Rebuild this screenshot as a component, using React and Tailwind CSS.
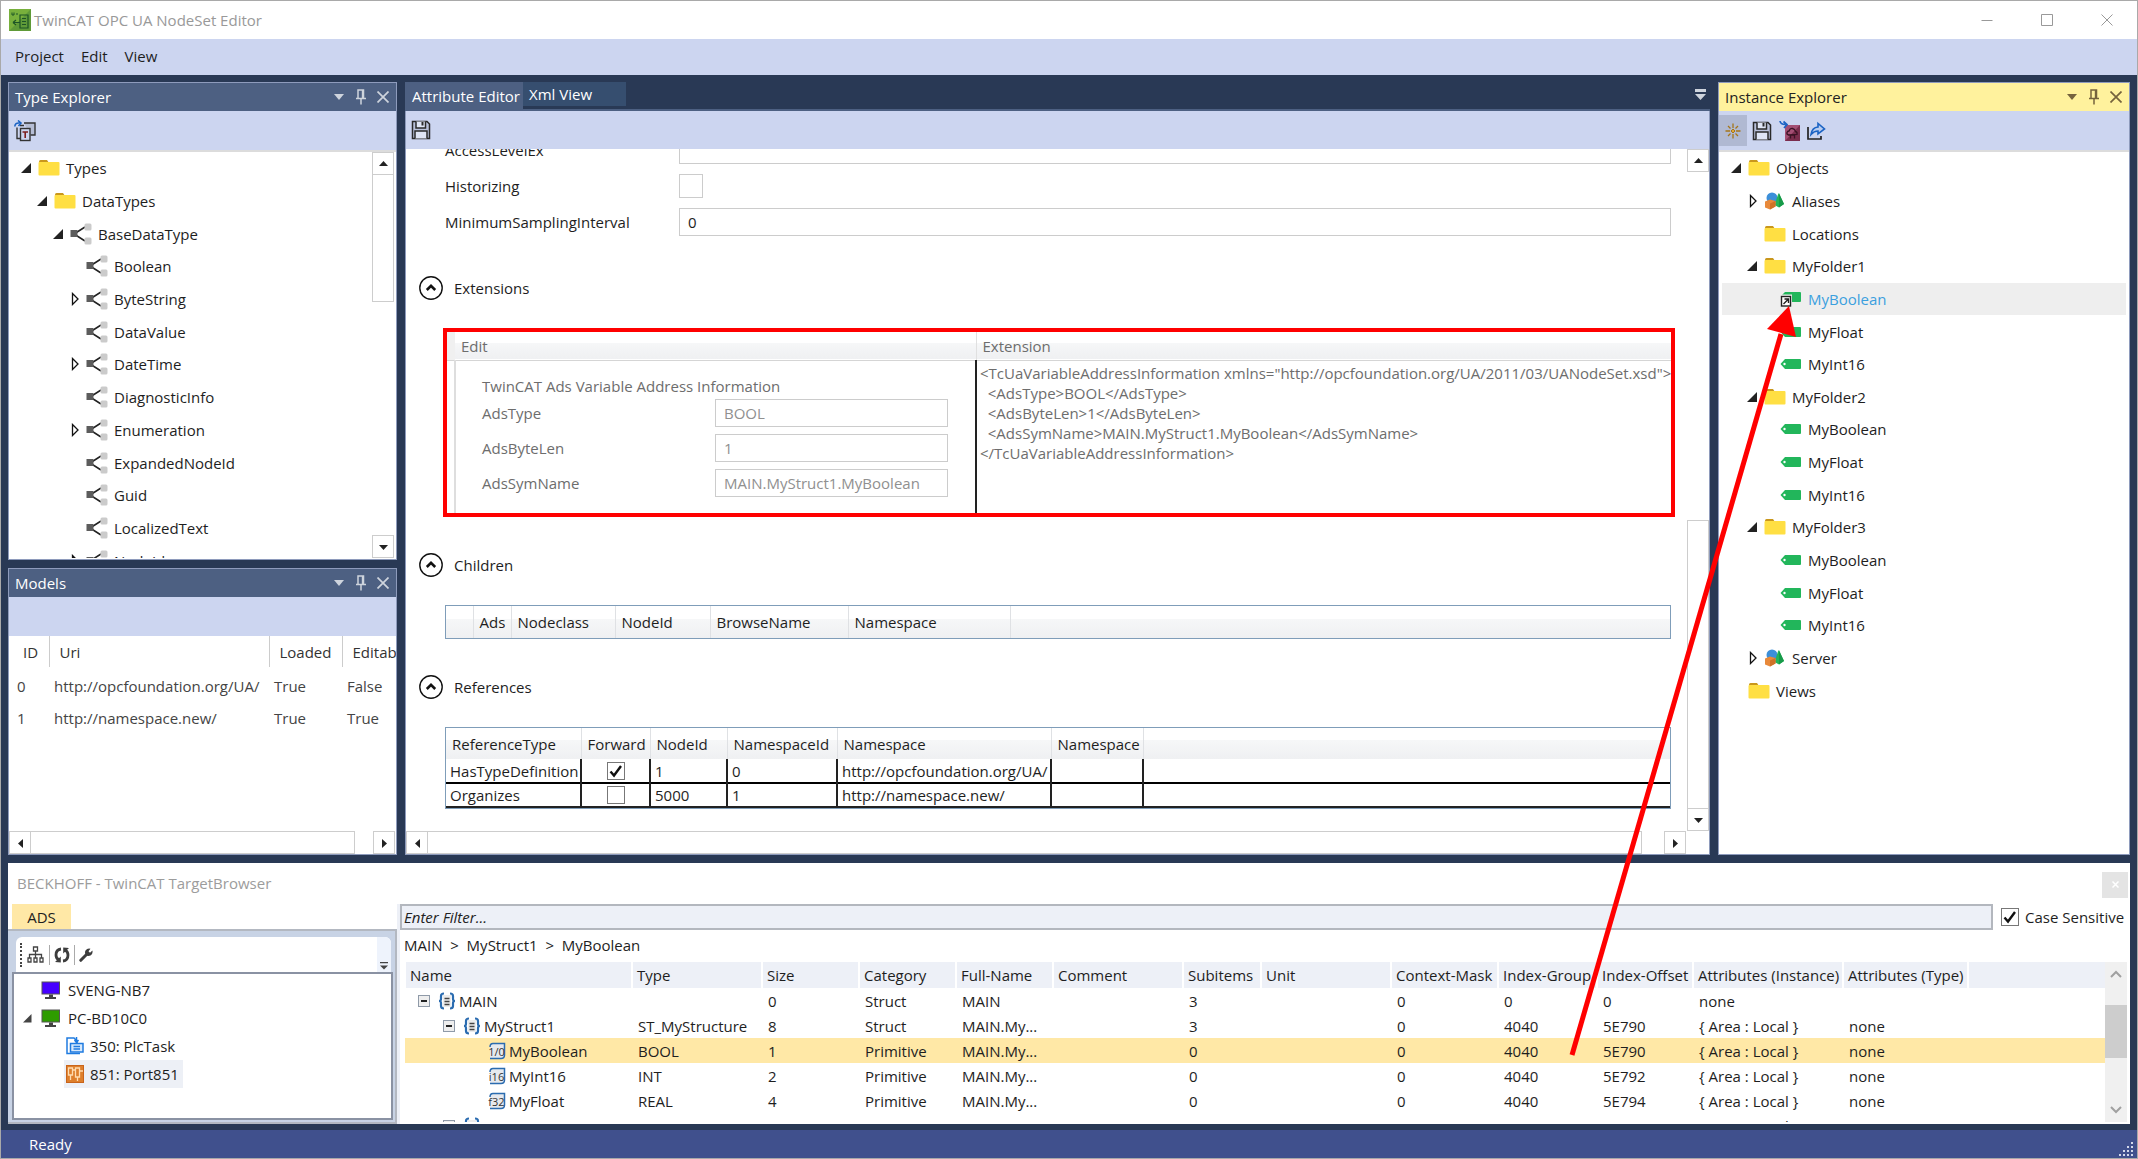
import React from 'react';
import clsx from 'clsx';

const indents = ['pl-2', 'pl-6', 'pl-10', 'pl-14'];

const typeNodes = [
  { label: 'Types', level: 0, icon: 'folder', state: 'open' },
  { label: 'DataTypes', level: 1, icon: 'folder', state: 'open' },
  { label: 'BaseDataType', level: 2, icon: 'type', state: 'open' },
  { label: 'Boolean', level: 3, icon: 'type' },
  { label: 'ByteString', level: 3, icon: 'type', state: 'closed' },
  { label: 'DataValue', level: 3, icon: 'type' },
  { label: 'DateTime', level: 3, icon: 'type', state: 'closed' },
  { label: 'DiagnosticInfo', level: 3, icon: 'type' },
  { label: 'Enumeration', level: 3, icon: 'type', state: 'closed' },
  { label: 'ExpandedNodeId', level: 3, icon: 'type' },
  { label: 'Guid', level: 3, icon: 'type' },
  { label: 'LocalizedText', level: 3, icon: 'type' },
  { label: 'NodeId', level: 3, icon: 'type', state: 'closed' },
];

const instanceNodes = [
  { label: 'Objects', level: 0, icon: 'folder', state: 'open' },
  { label: 'Aliases', level: 1, icon: 'object', state: 'closed' },
  { label: 'Locations', level: 1, icon: 'folder' },
  { label: 'MyFolder1', level: 1, icon: 'folder', state: 'open' },
  { label: 'MyBoolean', level: 2, icon: 'linkedTag', selected: true },
  { label: 'MyFloat', level: 2, icon: 'tag' },
  { label: 'MyInt16', level: 2, icon: 'tag' },
  { label: 'MyFolder2', level: 1, icon: 'folder', state: 'open' },
  { label: 'MyBoolean', level: 2, icon: 'tag' },
  { label: 'MyFloat', level: 2, icon: 'tag' },
  { label: 'MyInt16', level: 2, icon: 'tag' },
  { label: 'MyFolder3', level: 1, icon: 'folder', state: 'open' },
  { label: 'MyBoolean', level: 2, icon: 'tag' },
  { label: 'MyFloat', level: 2, icon: 'tag' },
  { label: 'MyInt16', level: 2, icon: 'tag' },
  { label: 'Server', level: 1, icon: 'object', state: 'closed' },
  { label: 'Views', level: 0, icon: 'folder' },
];

const models = [
  ['0', 'http://opcfoundation.org/UA/', 'True', 'False'],
  ['1', 'http://namespace.new/', 'True', 'True'],
];

const references = [
  { type: 'HasTypeDefinition', forward: true, nodeId: '1', nsId: '0', ns: 'http://opcfoundation.org/UA/' },
  { type: 'Organizes', forward: false, nodeId: '5000', nsId: '1', ns: 'http://namespace.new/' },
];

const adsFields = [
  ['AdsType', 'BOOL'],
  ['AdsByteLen', '1'],
  ['AdsSymName', 'MAIN.MyStruct1.MyBoolean'],
];

const xml = `<TcUaVariableAddressInformation xmlns="http://opcfoundation.org/UA/2011/03/UANodeSet.xsd">
  <AdsType>BOOL</AdsType>
  <AdsByteLen>1</AdsByteLen>
  <AdsSymName>MAIN.MyStruct1.MyBoolean</AdsSymName>
</TcUaVariableAddressInformation>`;

const symbolColumns = [
  ['Name', 'w-[227px]'],
  ['Type', 'w-[130px]'],
  ['Size', 'w-[97px]'],
  ['Category', 'w-[97px]'],
  ['Full-Name', 'w-[97px]'],
  ['Comment', 'w-[130px]'],
  ['Subitems', 'w-[78px]'],
  ['Unit', 'w-[130px]'],
  ['Context-Mask', 'w-[107px]'],
  ['Index-Group', 'w-[99px]'],
  ['Index-Offset', 'w-[96px]'],
  ['Attributes (Instance)', 'w-[150px]'],
  ['Attributes (Type)', 'w-[125px]'],
  ['', 'w-auto'],
];

const local = '{ Area : Local }';
const symbols = [
  { name: 'MAIN', level: 0, icon: 'struct', cells: ['', '0', 'Struct', 'MAIN', '', '3', '', '0', '0', '0', 'none', ''] },
  { name: 'MyStruct1', level: 1, icon: 'struct', cells: ['ST_MyStructure', '8', 'Struct', 'MAIN.My...', '', '3', '', '0', '4040', '5E790', local, 'none'] },
  { name: 'MyBoolean', level: 2, icon: '1/0', selected: true, cells: ['BOOL', '1', 'Primitive', 'MAIN.My...', '', '0', '', '0', '4040', '5E790', local, 'none'] },
  { name: 'MyInt16', level: 2, icon: 'i16', cells: ['INT', '2', 'Primitive', 'MAIN.My...', '', '0', '', '0', '4040', '5E792', local, 'none'] },
  { name: 'MyFloat', level: 2, icon: 'f32', cells: ['REAL', '4', 'Primitive', 'MAIN.My...', '', '0', '', '0', '4040', '5E794', local, 'none'] },
  { name: 'MyStruct2', level: 1, icon: 'struct', cells: ['ST_MyStructure', '8', 'Struct', 'MAIN.My...', '', '3', '', '0', '4040', '5E798', local, 'none'] },
];
const symbolIndents = ['pl-[13px]', 'pl-[38px]', 'pl-[83px]'];

const headerFill = 'bg-[linear-gradient(#ffffff_40%,#f6f7f8_40%,#eff0f2)]';

const FolderIcon = () => (
  <svg viewBox="0 0 22 18" className="w-[22px] h-[18px]">
    <path d="M1 4V2.5Q1 1 2.500 1H9L11 4Z" fill="#c9971c" />
    <path d="M.5 4Q.5 3 1.500 3H20.500Q21.500 3 21.500 4V15.500Q21.500 16.500 20.500 16.500H1.500Q.5 16.500 .5 15.500Z" fill="#ffdf43" />
  </svg>
);

const TypeIcon = () => (
  <svg viewBox="0 0 22 22" className="w-[22px] h-[22px]">
    <path d="M15 4L4 11L15 18" fill="none" stroke="#222" strokeWidth="1.600" />
    <rect x="14.500" y="0.500" width="7" height="7" rx="1.500" fill="#cbcbcb" />
    <rect x="14.500" y="14.500" width="7" height="7" rx="1.500" fill="#cbcbcb" />
    <rect x="0.500" y="7" width="7" height="7" fill="#5c5c5c" />
  </svg>
);

const ObjectIcon = () => (
  <svg viewBox="0 0 22 18" className="w-[22px] h-[18px]">
    <circle cx="8" cy="6" r="5.500" fill="#3c8fd9" />
    <path d="M14.500 1L20 12L15 15.500L10.500 13Z" fill="#22b45a" />
    <path d="M15 1L20 12L15 15.500Z" fill="#179a49" />
    <path d="M1 9.500L6 7.500L11.500 9V14.500L6 17.500L1 15.500Z" fill="#e8893a" />
    <path d="M6 11.500L11.500 9V14.500L6 17.500Z" fill="#cf7227" />
  </svg>
);

const TagIcon = () => (
  <svg viewBox="0 0 22 12" className="w-[22px] h-3">
    <path d="M0.500 6L5 1H20Q21 1 21 2V10Q21 11 20 11H5Z" fill="#22b65b" />
    <circle cx="4.500" cy="6" r="1.200" fill="#fff" />
  </svg>
);

const LinkedTagIcon = () => (
  <svg viewBox="0 0 22 18" className="w-[22px] h-[18px]">
    <path d="M2 5L5 2H20Q21 2 21 3V11Q21 12 20 12H5Z" fill="#22b65b" />
    <rect x="0" y="4.500" width="12" height="13" fill="#eee" />
    <rect x="1.500" y="6.500" width="9" height="9.500" fill="#fff" stroke="#222" strokeWidth="1.400" />
    <path d="M3.500 14L8 9.500M4.500 9H8.500V13" fill="none" stroke="#222" strokeWidth="1.400" />
  </svg>
);

const nodeIcons = { folder: FolderIcon, type: TypeIcon, object: ObjectIcon, tag: TagIcon, linkedTag: LinkedTagIcon };

const Expander = ({ state }) => (
  <span className="w-[18px] shrink-0 flex items-center">
    {state === 'open' && (
      <svg viewBox="0 0 12 12" className="w-3 h-3">
        <path d="M11 1V11H1Z" fill="#222" />
      </svg>
    )}
    {state === 'closed' && (
      <svg viewBox="0 0 12 14" className="w-3 h-3.5 ml-[3px]">
        <path d="M1.500 1.500L7 7L1.500 12.500Z" fill="#fff" stroke="#111" strokeWidth="1.300" />
      </svg>
    )}
  </span>
);

const Tree = ({ nodes, className }) => (
  <ul className={clsx('grid auto-rows-fr shrink-0 mx-[3px]', className)}>
    {nodes.map((node, i) => {
      const Icon = nodeIcons[node.icon];
      return (
        <li
          key={i}
          className={clsx('flex items-center', indents[node.level], node.selected && 'bg-[#eeeeee] text-[#3ba0de]')}
        >
          <Expander state={node.state} />
          <Icon />
          <span className="pl-1.5">{node.label}</span>
        </li>
      );
    })}
  </ul>
);

const DockHeader = ({ title, active }) => (
  <div
    className={clsx(
      'h-7 shrink-0 flex items-center pl-1.5 pr-0.5',
      active ? 'bg-[#fff29d] text-[#222]' : 'bg-[#4d6082] text-white',
    )}
  >
    <h2 className="flex-1">{title}</h2>
    <div className={clsx('flex items-center', active ? 'text-[#75633d]' : 'text-[#ced4dd]')}>
      <button type="button" aria-label="Window position" className="w-[22px] flex justify-center">
        <svg viewBox="0 0 10 6" className="w-2.5 h-1.5"><path d="M0 0H10L5 6Z" fill="currentColor" /></svg>
      </button>
      <button type="button" aria-label="Auto hide" className="w-[22px] flex justify-center">
        <svg viewBox="0 0 10 16" className="w-2.5 h-4" fill="none" stroke="currentColor" strokeWidth="1.500">
          <path d="M2 9V1H7.500V9M0 9.500H10M5 9.500V15.500" />
          <path d="M6.800 1V9" strokeWidth="2" />
        </svg>
      </button>
      <button type="button" aria-label="Close" className="w-[22px] flex justify-center">
        <svg viewBox="0 0 12 12" className="w-3 h-3" stroke="currentColor" strokeWidth="1.700"><path d="M.5 .5L11.500 11.500M11.500 .5L.5 11.500" /></svg>
      </button>
    </div>
  </div>
);

const arrows = {
  up: 'M1 7L5.500 2L10 7Z',
  down: 'M1 3L5.500 8L10 3Z',
  left: 'M8 1V10L3 5.500Z',
  right: 'M3 1V10L8 5.500Z',
};

const ScrollButton = ({ dir }) => (
  <button type="button" aria-label={`Scroll ${dir}`} className="w-[22px] h-[23px] shrink-0 border border-[#cdcdcd] flex items-center justify-center bg-white">
    <svg viewBox="0 0 11 10" className="w-[11px] h-2.5"><path d={arrows[dir]} fill="#222" /></svg>
  </button>
);

const Checkbox = ({ id, checked, label, className }) => (
  <span className={clsx('inline-grid', className)}>
    <input
      id={id}
      type="checkbox"
      aria-label={label}
      defaultChecked={checked}
      className="peer appearance-none w-full h-full border border-[#777] bg-white [grid-area:1/1]"
    />
    <svg viewBox="0 0 18 18" className="w-full h-full hidden peer-checked:block pointer-events-none [grid-area:1/1]">
      <path d="M3.500 9.500L7 13.500L14 4" fill="none" stroke="#111" strokeWidth="2.400" />
    </svg>
  </span>
);

const SaveIcon = () => (
  <svg viewBox="0 0 20 20" className="w-5 h-5" fill="none" stroke="#2a2a2a" strokeWidth="1.500">
    <path d="M1.500 1.500H16L18.500 4V18.500H1.500Z" fill="#b9c1da" />
    <path d="M5 1.500V8H14.500V1.500" fill="#dfe5f5" />
    <path d="M4 18.500V11H16V18.500" fill="#dfe5f5" />
    <path d="M11.500 2V5.500" strokeWidth="2" />
  </svg>
);

const Section = ({ title, children }) => (
  <section className="mt-9">
    <div className="flex items-center gap-[11px] pl-[13px] h-6">
      <button type="button" aria-label={`Collapse ${title}`} className="w-6 h-6 rounded-full">
        <svg viewBox="0 0 24 24" className="w-6 h-6" fill="none" stroke="#111">
          <circle cx="12" cy="12" r="11.200" strokeWidth="1.400" />
          <path d="M7.800 14L12 9.800L16.200 14" strokeWidth="2.600" />
        </svg>
      </button>
      <h3>{title}</h3>
    </div>
    <div className="mt-7">{children}</div>
  </section>
);

const TypeExplorer = () => (
  <section className="flex-1 min-h-0 flex flex-col border border-[#8e9bbc] bg-white">
    <DockHeader title="Type Explorer" />
    <div className="h-[39px] shrink-0 bg-[#ccd5f0] flex items-center pl-[5px]">
      <button type="button" aria-label="Import types">
        <svg viewBox="0 0 22 22" className="w-[22px] h-[22px]" fill="none" stroke="#333" strokeWidth="1.400">
          <path d="M10 3H21V15H16.500" fill="#b5bdd4" />
          <path d="M3 7.500V18.500H6M6 5.500H10" />
          <rect x="6.500" y="8.500" width="9.500" height="12" fill="#ccd5f0" />
          <path d="M8.500 12H14M11.200 12V18" stroke="#7d1f1f" strokeWidth="1.600" />
          <path d="M.8 6.500Q1 2.500 5.500 3M4 .5L7 3L4.500 6" stroke="#1b63c4" strokeWidth="1.600" />
        </svg>
      </button>
    </div>
    <div className="flex-1 min-h-0 flex border-t-2 border-[#dcdcdc] pb-px">
      <div className="flex-1 overflow-hidden flex flex-col">
        <Tree nodes={typeNodes} className="h-[425px]" />
      </div>
      <div className="w-[22px] flex flex-col bg-white mr-0.5">
        <ScrollButton dir="up" />
        <div className="h-[127px] border border-t-0 border-[#cdcdcd]" />
        <div className="flex-1" />
        <ScrollButton dir="down" />
      </div>
    </div>
  </section>
);

const Models = () => (
  <section className="h-[287px] flex flex-col border border-[#8e9bbc] bg-white">
    <DockHeader title="Models" />
    <div className="h-[39px] shrink-0 bg-[#ccd5f0]" />
    <div className="flex-1 overflow-hidden">
      <table className="table-fixed w-[460px] text-left text-[#444]">
        <colgroup>
          <col className="w-10" />
          <col className="w-[220px]" />
          <col className="w-[73px]" />
          <col className="w-[127px]" />
        </colgroup>
        <thead>
          <tr className="h-[31px] text-[#333]">
            <th className="font-medium pl-3.5 border-r border-[#ccc]">ID</th>
            <th className="font-medium pl-2.5 border-r border-[#ccc]">Uri</th>
            <th className="font-medium pl-2.5 border-r border-[#ccc]">Loaded</th>
            <th className="font-medium pl-2.5">Editable</th>
          </tr>
        </thead>
        <tbody>
          <tr className="h-[3px]"><td colSpan={4} /></tr>
          {models.map((row) => (
            <tr key={row[0]} className="h-8">
              <td className="pl-2">{row[0]}</td>
              {row.slice(1).map((cell, i) => (
                <td key={i} className="pl-[5px] whitespace-nowrap">{cell}</td>
              ))}
            </tr>
          ))}
        </tbody>
      </table>
    </div>
    <div className="flex h-[23px] shrink-0 pr-px">
      <ScrollButton dir="left" />
      <div className="flex-1 border border-l-0 border-[#cdcdcd]" />
      <div className="w-[18px]" />
      <ScrollButton dir="right" />
    </div>
  </section>
);

const ExtensionTable = () => (
  <div className="ml-[37px] mr-3 border-4 border-[#ff0000] text-[#6d6d6d]">
    <table className="table-fixed w-full text-left">
      <colgroup>
        <col className="w-2" />
        <col className="w-[521px]" />
        <col />
      </colgroup>
      <thead>
        <tr className={clsx('h-7 border-b border-[#d5d5d5]', headerFill)}>
          <th className="bg-[#f0f0f0]" />
          <th className="font-normal pl-1.5 border-r border-[#e0e0e0]">Edit</th>
          <th className="font-normal pl-1.5">Extension</th>
        </tr>
      </thead>
      <tbody>
        <tr className="h-[153px] align-top">
          <td className="border-r-2 border-[#dedede]" />
          <td className="border-r-2 border-[#222] pl-[26px] pt-[11px]">
            <p className="h-[27px] leading-7">TwinCAT Ads Variable Address Information</p>
            <div className="flex flex-col gap-[7px]">
              {adsFields.map(([label, value]) => (
                <div key={label} className="flex items-center">
                  <label htmlFor={label} className="w-[233px]">{label}</label>
                  <input id={label} readOnly value={value} className="w-[233px] h-7 border border-[#ccc] px-2 text-[#909090]" />
                </div>
              ))}
            </div>
          </td>
          <td className="pl-[3px] pt-0.5">
            <pre className="font-[inherit] leading-5">{xml}</pre>
          </td>
        </tr>
      </tbody>
    </table>
  </div>
);

const ChildrenTable = () => (
  <div className="ml-[39px] mr-4 border border-[#7f9db9]">
    <table className="table-fixed w-full text-left">
      <thead>
        <tr className={clsx('h-8', headerFill)}>
          <th className="w-[27px] border-r border-[#dfe1e4]" />
          <th className="w-[38px] font-normal pl-1.5 border-r border-[#dfe1e4]">Ads</th>
          <th className="w-[104px] font-normal pl-1.5 border-r border-[#dfe1e4]">Nodeclass</th>
          <th className="w-[95px] font-normal pl-1.5 border-r border-[#dfe1e4]">NodeId</th>
          <th className="w-[138px] font-normal pl-1.5 border-r border-[#dfe1e4]">BrowseName</th>
          <th className="w-[162px] font-normal pl-1.5 border-r border-[#dfe1e4]">Namespace</th>
          <th />
        </tr>
      </thead>
    </table>
  </div>
);

const ReferencesTable = () => (
  <div className="ml-[39px] mr-4 border border-[#7f9db9]">
    <table className="table-fixed w-full text-left">
      <colgroup>
        <col className="w-[135px]" />
        <col className="w-[69px]" />
        <col className="w-[77px]" />
        <col className="w-[110px]" />
        <col className="w-[214px]" />
        <col className="w-[92px]" />
        <col />
      </colgroup>
      <thead>
        <tr className={clsx('h-[31px]', headerFill)}>
          {['ReferenceType', 'Forward', 'NodeId', 'NamespaceId', 'Namespace', 'Namespace'].map((name, i) => (
            <th key={i} className="font-normal pl-1.5 border-r border-[#dfe1e4] whitespace-nowrap">{name}</th>
          ))}
          <th />
        </tr>
      </thead>
      <tbody>
        {references.map((ref) => (
          <tr key={ref.type} className="h-6 border-b-2 border-black last:border-[#222]">
            <td className="pl-1 border-r-2 border-[#222] whitespace-nowrap">{ref.type}</td>
            <td className="border-r-2 border-[#222]">
              <div className="flex justify-center">
                <Checkbox label={`${ref.type} forward`} checked={ref.forward} className="w-[18px] h-[18px]" />
              </div>
            </td>
            <td className="pl-1 border-r-2 border-[#222]">{ref.nodeId}</td>
            <td className="pl-1 border-r-2 border-[#222]">{ref.nsId}</td>
            <td className="pl-1 border-r-2 border-[#222] whitespace-nowrap">{ref.ns}</td>
            <td className="border-r-2 border-[#222]" />
            <td />
          </tr>
        ))}
      </tbody>
    </table>
  </div>
);

const AttributeEditor = () => (
  <section className="flex-1 min-w-0 flex flex-col">
    <div className="h-[29px] shrink-0 flex items-start justify-between border-b-2 border-[#4d6082]">
      <div className="flex items-start">
        <button type="button" className="h-7 w-[118px] bg-[#4d6082] text-white pl-[7px] text-left whitespace-nowrap">Attribute Editor</button>
        <button type="button" className="h-6 w-[103px] bg-[#364e6f] text-white pl-1.5 text-left">Xml View</button>
      </div>
      <button type="button" aria-label="Open documents" className="mt-[7px] mr-1">
        <svg viewBox="0 0 11 11" className="w-[11px] h-[11px]" fill="#ced4dd"><path d="M0 0H11V3H0ZM0 5H11L5.500 11Z" /></svg>
      </button>
    </div>
    <div className="flex-1 min-h-0 flex flex-col border border-t-0 border-[#8e9bbc] bg-white">
      <div className="h-[38px] shrink-0 bg-[#ccd5f0] flex items-center pl-[5px]">
        <button type="button" aria-label="Save"><SaveIcon /></button>
      </div>
      <div className="flex-1 min-h-0 flex">
        <div className="flex-1 min-w-0 overflow-hidden">
          <div className="-mt-[17px] pl-[39px] pr-4">
            <div className="h-9 flex items-center">
              <label htmlFor="accessLevelEx" className="w-[234px]">AccessLevelEx</label>
              <input id="accessLevelEx" defaultValue="" className="flex-1 h-[27px] border border-[#ccc] px-2" />
            </div>
            <div className="h-9 flex items-center">
              <label htmlFor="historizing" className="w-[234px]">Historizing</label>
              <input id="historizing" type="checkbox" className="appearance-none w-6 h-6 border border-[#ccc]" />
            </div>
            <div className="h-9 flex items-center">
              <label htmlFor="samplingInterval" className="w-[234px]">MinimumSamplingInterval</label>
              <input id="samplingInterval" defaultValue="0" className="flex-1 h-7 border border-[#ccc] px-2" />
            </div>
          </div>
          <Section title="Extensions"><ExtensionTable /></Section>
          <Section title="Children"><ChildrenTable /></Section>
          <Section title="References"><ReferencesTable /></Section>
        </div>
        <div className="w-[22px] flex flex-col">
          <ScrollButton dir="up" />
          <div className="flex-1" />
          <div className="h-[288px] border border-b-0 border-[#cdcdcd]" />
          <ScrollButton dir="down" />
        </div>
      </div>
      <div className="flex h-[23px] shrink-0 pr-[23px]">
        <ScrollButton dir="left" />
        <div className="flex-1 border border-l-0 border-[#cdcdcd]" />
        <div className="w-[22px]" />
        <ScrollButton dir="right" />
      </div>
    </div>
  </section>
);

const InstanceExplorer = () => (
  <section className="w-[412px] shrink-0 flex flex-col border border-[#8e9bbc] bg-white">
    <DockHeader title="Instance Explorer" active />
    <div className="h-[39px] shrink-0 bg-[#ccd5f0] flex items-center gap-[5px]">
      <button type="button" aria-label="Highlight new" className="w-7 h-[31px] bg-[#b0b9d2] flex items-center justify-center">
        <svg viewBox="0 0 16 16" className="w-4 h-4" stroke="#a5761a" strokeWidth="1.300" fill="none">
          <path d="M8 0.500V5M8 11V15.500M.5 8H5M11 8H15.500M3 3L5.500 5.500M10.500 10.500L13 13M13 3L10.500 5.500M5.500 10.500L3 13" />
          <path d="M8 6L10 8L8 10L6 8Z" fill="#e0a83a" strokeWidth="1" />
        </svg>
      </button>
      <button type="button" aria-label="Save instances"><SaveIcon /></button>
      <button type="button" aria-label="Import" className="ml-0.5">
        <svg viewBox="0 0 22 22" className="w-[22px] h-[22px]" fill="none">
          <path d="M6 5H21V21H6Z" fill="#a34f74" />
          <path d="M6 21H21V5Z" fill="#7a2d4d" />
          <path d="M9.500 15Q7.500 14.500 8 12.500Q8.500 11 10 11Q11 8 13.500 8.500Q16 9 16.500 11.500Q18.500 12 18 14.500L9.500 15ZM11.500 15V18.500M15.500 15V18.500" stroke="#3a1224" strokeWidth="1.300" />
          <path d="M1 1Q1.500 4.500 6.500 4.500M4.500 1.500L8 4.500L5 8" stroke="#1b63c4" strokeWidth="1.700" />
        </svg>
      </button>
      <button type="button" aria-label="Export">
        <svg viewBox="0 0 20 20" className="w-5 h-5" fill="none">
          <path d="M2 6V18H15V15" stroke="#222" strokeWidth="1.700" />
          <path d="M5 13.500Q6 6.500 12 6V2.500L18.500 8L12 13V10Q8 10 5 13.500Z" stroke="#1b63c4" strokeWidth="1.600" fill="#b9cdf0" />
        </svg>
      </button>
    </div>
    <div className="flex-1 min-h-0 overflow-hidden flex flex-col border-t-2 border-[#dcdcdc]">
      <Tree nodes={instanceNodes} className="h-[555px]" />
    </div>
  </section>
);

const Monitor = ({ fill }) => (
  <svg viewBox="0 0 20 18" className="w-5 h-[18px]">
    <rect x="0.500" y="0.500" width="18.500" height="13" fill="#555" />
    <rect x="1.500" y="1.500" width="16.500" height="11" fill={fill} />
    <path d="M8 13.500H12V16H15V18H4V16H8Z" fill="#444" />
  </svg>
);

const TargetTree = () => (
  <div className="w-[389px] shrink-0 flex flex-col">
    <div className="pl-1 flex">
      <button type="button" className="w-[59px] h-[25px] bg-[#ffe8a6]">ADS</button>
    </div>
    <div className="flex-1 flex flex-col bg-[#c8d3e5] border-2 border-[#b3b8c1] border-l-0 pt-1.5 pb-0.5">
      <div className="h-[35px] ml-2 mr-1 bg-white rounded-t-md flex items-center overflow-hidden">
        <div className="flex-1 flex items-center gap-[5px] pl-1">
          <span className="h-6 border-l-2 border-dotted border-[#444]" />
          <button type="button" aria-label="Routes">
            <svg viewBox="0 0 17 17" className="w-[17px] h-[17px]" fill="none" stroke="#444" strokeWidth="1.300">
              <path d="M6.500 1H10.500V5H6.500ZM1 12H4V16H1ZM7 12H10V16H7ZM13 12H16V16H13ZM8.500 5V12M2.500 12V8.500H14.500V12" />
            </svg>
          </button>
          <span className="h-5 w-px bg-[#aaa]" />
          <button type="button" aria-label="Refresh" className="-mx-px">
            <svg viewBox="0 0 16 16" className="w-4 h-4" fill="none" stroke="#3d3d3d">
              <path d="M7 2Q2 2.500 2 8Q2 11.500 5 13M9 14Q14 13.500 14 8Q14 4.500 11 3" strokeWidth="2.800" />
              <path d="M1 15L6.800 15.500V9.500ZM15 1L9.200 .5V6.500Z" fill="#3d3d3d" stroke="none" />
            </svg>
          </button>
          <span className="h-5 w-px bg-[#aaa]" />
          <button type="button" aria-label="Settings" className="-mx-px">
            <svg viewBox="0 0 14 14" className="w-3.5 h-3.5">
              <path d="M1.800 12.300L8 6" stroke="#3d3d3d" strokeWidth="3" strokeLinecap="round" />
              <path d="M11.500 .8L9.500 3.200L11 4.700L13.400 2.600Q14.200 6 11.500 7.500Q9 8.500 7 7Q5.300 5 6.500 2.500Q8.300 0 11.500 .8Z" fill="#3d3d3d" />
            </svg>
          </button>
        </div>
        <button type="button" aria-label="Toolbar options" className="w-3.5 h-full bg-[#eef3fc] flex items-end justify-center pb-0.5">
          <svg viewBox="0 0 8 8" className="w-2 h-2" fill="#444"><path d="M0 0H8V1.200H0ZM0 3.500H8L4 7.500Z" /></svg>
        </button>
      </div>
      <ul className="flex-1 ml-1 mr-0.5 border-2 border-[#8a92a3] bg-white pt-0.5">
        <li className="h-7 flex items-center gap-[7px] pl-[27px]"><Monitor fill="#4600ff" />SVENG-NB7</li>
        <li className="h-7 flex items-center gap-[7px] pl-2">
          <svg viewBox="0 0 12 11" className="w-3 h-[11px]"><path d="M9.500 1V9.500H1Z" fill="#444" /></svg>
          <Monitor fill="#2e9c00" />PC-BD10C0
        </li>
        <li className="h-7 flex items-center gap-1.5 pl-[52px]">
          <svg viewBox="0 0 18 18" className="w-[18px] h-[18px]" fill="none" stroke="#1f7be0" strokeWidth="1.500">
            <path d="M6 16.500H1V1H8L11 4V6" />
            <path d="M10.500 0V6M8.500 3L10.500 5.500L12.500 3" />
            <rect x="4.500" y="6.500" width="12.500" height="8.500" fill="#d5e8fc" />
            <path d="M7.500 9.500H14M7.500 12H14M6 16.500H14" />
          </svg>
          350: PlcTask
        </li>
        <li className="h-7 ml-[50px] w-fit flex items-center gap-1.5 pl-0.5 pr-1 bg-[#edf0f6]">
          <svg viewBox="0 0 18 18" className="w-[18px] h-[18px]">
            <rect width="18" height="18" fill="#c9641a" />
            <rect x="1" y="1" width="16" height="16" fill="#de7f2c" />
            <path d="M2.500 3H6.500V10H2.500ZM9.500 3H13.500V12H9.500ZM4.500 10V15M11.500 12V16M13.500 6H17M6.500 5H9.500" fill="none" stroke="#ffdcb0" strokeWidth="1.300" />
          </svg>
          851: Port851
        </li>
      </ul>
    </div>
  </div>
);

const SymbolIcon = ({ kind }) => {
  if (kind === 'struct') {
    return (
      <svg viewBox="0 0 18 18" className="w-[18px] h-[18px] shrink-0" fill="none">
        <rect x="5" y="3" width="8" height="12" fill="#ececec" />
        <path d="M6 1.500Q3 1.500 3 4V7Q3 9 1 9Q3 9 3 11V14Q3 16.500 6 16.500M12 1.500Q15 1.500 15 4V7Q15 9 17 9Q15 9 15 11V14Q15 16.500 12 16.500" stroke="#2b6cb0" strokeWidth="2.200" />
        <path d="M6.500 6.500H11.500M6.500 9.500H11.500M6.500 12.500H11.500" stroke="#444" strokeWidth="1.400" />
      </svg>
    );
  }
  return (
    <svg viewBox="0 0 18 18" className="w-[18px] h-[18px] shrink-0">
      <path d="M2 5Q2 1.500 5 1.500H16.500V13Q16.500 16.500 13 16.500H2" fill="#e6e9ee" stroke="#2b6cb0" strokeWidth="1.500" />
      <text x="8.500" y="13.500" textAnchor="middle" fontSize="11" fill="#333">{kind}</text>
    </svg>
  );
};

const SymbolTable = () => (
  <div className="flex-1 min-h-0 overflow-hidden">
    <table className="table-fixed w-full text-left">
      <colgroup>
        {symbolColumns.map(([name, width]) => <col key={name} className={width} />)}
      </colgroup>
      <thead>
        <tr className="h-[26px]">
          {symbolColumns.map(([name]) => (
            <th key={name} className="font-normal pl-1 border-l-2 border-white bg-[#edf0f7] whitespace-nowrap">{name}</th>
          ))}
        </tr>
      </thead>
      <tbody>
        {symbols.map((symbol) => (
          <tr key={symbol.name} className={clsx('h-[25px]', symbol.selected && 'bg-[#ffe8a6]')}>
            <td className={symbolIndents[symbol.level]}>
              <div className="flex items-center">
                {symbol.icon === 'struct' && (
                  <button type="button" aria-label={`Collapse ${symbol.name}`} className="w-3 h-3 mr-2 border border-[#8f9aa8] bg-[#eee] flex items-center justify-center">
                    <span className="w-1.5 h-0.5 bg-[#222]" />
                  </button>
                )}
                <SymbolIcon kind={symbol.icon} />
                <span className="pl-[3px]">{symbol.name}</span>
              </div>
            </td>
            {symbol.cells.map((cell, i) => (
              <td key={i} className="pl-1.5 whitespace-nowrap">{cell}</td>
            ))}
            <td />
          </tr>
        ))}
      </tbody>
    </table>
  </div>
);

const TargetBrowser = () => (
  <section className="h-[261px] shrink-0 bg-white flex flex-col">
    <div className="h-[41px] shrink-0 flex items-center justify-between pl-[9px] pr-0.5 text-[#9c9c9c]">
      <h2 className="pb-0.5">BECKHOFF - TwinCAT TargetBrowser</h2>
      <button type="button" aria-label="Close target browser" className="w-[26px] h-[26px] mt-0.5 bg-[#e4e4e4] text-white flex items-center justify-center">
        <svg viewBox="0 0 7 7" className="w-[7px] h-[7px]" stroke="currentColor" strokeWidth="1.500"><path d="M.5 .5L6.500 6.500M6.500 .5L.5 6.500" /></svg>
      </button>
    </div>
    <div className="flex-1 min-h-0 flex">
      <TargetTree />
      <div className="w-[3px] bg-[#edf0f7]" />
      <div className="flex-1 min-w-0 flex flex-col">
        <div className="flex items-center h-[26px] pr-1">
          <input
            aria-label="Filter"
            placeholder="Enter Filter..."
            className="flex-1 h-[26px] border-2 border-[#b3b7be] bg-[#edf0f7] px-0.5 italic placeholder:text-[#222]"
          />
          <div className="flex items-center gap-1.5 w-[133px] pl-2">
            <Checkbox id="caseSensitive" checked className="w-[18px] h-[18px] shrink-0" />
            <label htmlFor="caseSensitive" className="whitespace-nowrap">Case Sensitive</label>
          </div>
        </div>
        <p className="h-8 leading-[31px] pl-1">MAIN &nbsp;&gt;&nbsp; MyStruct1 &nbsp;&gt;&nbsp; MyBoolean</p>
        <div className="flex-1 min-h-0 flex pl-1 pr-[3px] pb-0.5">
          <SymbolTable />
          <div className="w-[22px] shrink-0 bg-[#f0f0f0] flex flex-col items-center">
            <button type="button" aria-label="Scroll table up" className="h-[43px] pt-2 flex items-start">
              <svg viewBox="0 0 12 8" className="w-3 h-2" fill="none" stroke="#a0a0a0" strokeWidth="2"><path d="M1 7L6 2L11 7" /></svg>
            </button>
            <div className="h-[53px] w-full bg-[#cdcdcd]" />
            <div className="flex-1" />
            <button type="button" aria-label="Scroll table down" className="pb-2">
              <svg viewBox="0 0 12 8" className="w-3 h-2" fill="none" stroke="#a0a0a0" strokeWidth="2"><path d="M1 1L6 6L11 1" /></svg>
            </button>
          </div>
        </div>
      </div>
    </div>
  </section>
);

const RedArrow = () => (
  <svg viewBox="0 0 250 770" className="absolute right-[328px] top-[295px] w-[250px] h-[770px] pointer-events-none">
    <path d="M13 759L222 38" stroke="#ff0000" strokeWidth="5" />
    <path d="M230 10L208 33L237 41Z" fill="#ff0000" />
  </svg>
);

const App = () => (
  <div className="relative h-screen flex flex-col overflow-hidden border border-[#a9a9a9] bg-[#293955] font-['Open_Sans','Noto_Sans',sans-serif] text-[15px] leading-5 text-[#1e1e1e]">
    <header className="h-[38px] shrink-0 bg-white flex items-center justify-between pl-2 text-[#999]">
      <div className="flex items-center gap-[3px]">
        <svg viewBox="0 0 22 22" className="w-[22px] h-[22px]">
          <rect width="22" height="22" fill="#78b03c" />
          <path d="M22 0V22H0Z" fill="#5f9a38" />
          <path d="M11 6H19V19H11ZM4 13.500H11M4 13.500L7 11M4 13.500L7 16M13 9.500H17M13 12.500H17M13 15.500H17" fill="none" stroke="#1c5426" strokeWidth="1.200" />
          <path d="M3 3.500V6H5V3.500M7 5H9" fill="none" stroke="#1c5426" />
        </svg>
        <h1>TwinCAT OPC UA NodeSet Editor</h1>
      </div>
      <div className="flex">
        <button type="button" aria-label="Minimize" className="w-[60px] flex justify-center">
          <svg viewBox="0 0 12 12" className="w-3 h-3" stroke="#999"><path d="M.5 6.500H11.500" /></svg>
        </button>
        <button type="button" aria-label="Maximize" className="w-[60px] flex justify-center">
          <svg viewBox="0 0 12 12" className="w-3 h-3" stroke="#999" fill="none"><path d="M.5 .5H11.500V11.500H.5Z" /></svg>
        </button>
        <button type="button" aria-label="Close window" className="w-[60px] flex justify-center">
          <svg viewBox="0 0 12 12" className="w-3 h-3" stroke="#999"><path d="M.5 .5L11.500 11.500M11.500 .5L.5 11.500" /></svg>
        </button>
      </div>
    </header>
    <nav className="h-9 shrink-0 bg-[#ccd5f0] flex items-center gap-[17px] pl-3.5 pb-0.5">
      <button type="button">Project</button>
      <button type="button">Edit</button>
      <button type="button">View</button>
    </nav>
    <main className="flex-1 min-h-0 flex flex-col gap-2 px-[7px] pt-[7px] pb-1.5">
      <div className="flex-1 min-h-0 flex gap-2">
        <div className="w-[389px] shrink-0 flex flex-col gap-2">
          <TypeExplorer />
          <Models />
        </div>
        <AttributeEditor />
        <InstanceExplorer />
      </div>
      <TargetBrowser />
    </main>
    <footer className="h-7 shrink-0 bg-[#40508d] text-white flex items-center justify-between pl-7">
      <span>Ready</span>
      <svg viewBox="0 0 16 16" className="w-4 h-4 self-end mr-0.5" fill="#d3d8ea">
        <path d="M12 0H14V2H12ZM12 4H14V6H12ZM8 4H10V6H8ZM12 8H14V10H12ZM8 8H10V10H8ZM4 8H6V10H4ZM12 12H14V14H12ZM8 12H10V14H8ZM4 12H6V14H4ZM0 12H2V14H0Z" />
      </svg>
    </footer>
    <RedArrow />
  </div>
);

export default App;
